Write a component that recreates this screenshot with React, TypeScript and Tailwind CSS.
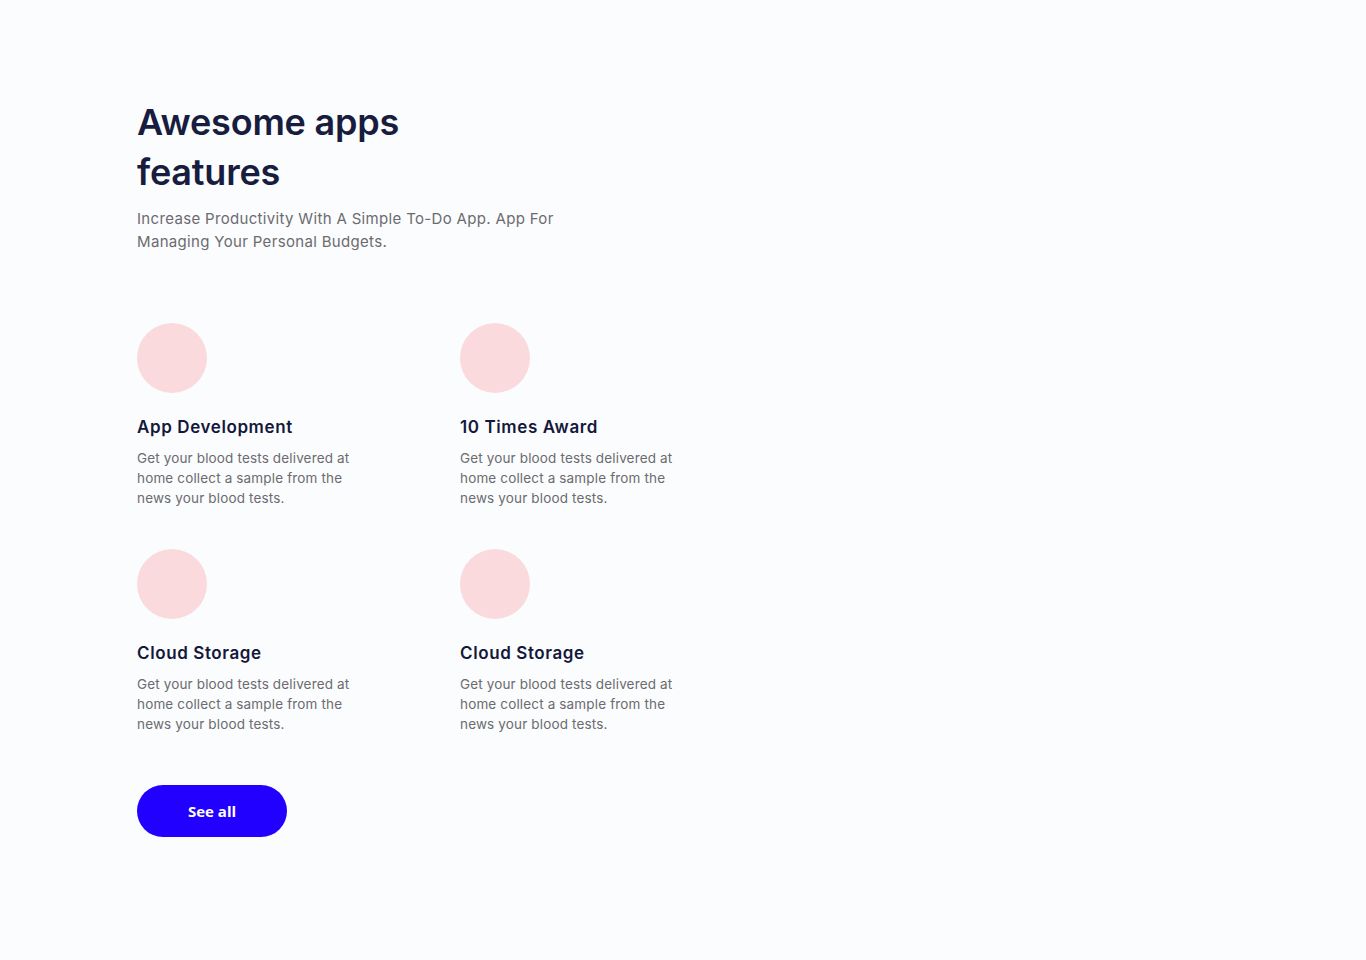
import React from "react";

const features = [
  { title: "App Development" },
  { title: "10 Times Award" },
  { title: "Cloud Storage" },
  { title: "Cloud Storage" },
];

export default function App() {
  return (
    <div
      className="min-h-[960px] w-full bg-[#fbfcfd]"
      style={{ fontFamily: "Inter, 'Noto Sans', sans-serif" }}
    >
      <div className="pl-[137px] pt-[97px]">
        <h1 className="text-[36px] leading-[50px] font-semibold tracking-[-0.2px] text-[#181d3f]">
          Awesome apps
          <br />
          features
        </h1>
        <p className="mt-[10px] w-[460px] text-[15px] leading-[23px] tracking-[0.33px] text-[#6b6b70]">
          Increase Productivity With A Simple To-Do App. App For Managing Your Personal Budgets.
        </p>
        <div className="mt-[70px] grid w-[646px] grid-cols-2 gap-y-[41px]">
          {features.map((f, i) => (
            <div key={i} className="flex flex-col">
              <div className="h-[70px] w-[70px] rounded-full bg-[#fbdadd]" />
              <h3 className="mt-[23px] text-[17px] leading-[22px] font-semibold tracking-[0.6px] text-[#14183a]">
                {f.title}
              </h3>
              <p className="mt-[10px] w-[235px] text-[13.5px] leading-[20px] tracking-[0.15px] text-[#6b6b70]">
                Get your blood tests delivered at home collect a sample from the news your blood tests.
              </p>
            </div>
          ))}
        </div>
        <button
          className="mt-[51px] flex h-[52px] w-[150px] items-center justify-center rounded-full bg-[#2200ff] text-[15px] font-bold text-white"
          style={{ fontFamily: "'Open Sans', sans-serif" }}
        >
          See all
        </button>
      </div>
    </div>
  );
}
